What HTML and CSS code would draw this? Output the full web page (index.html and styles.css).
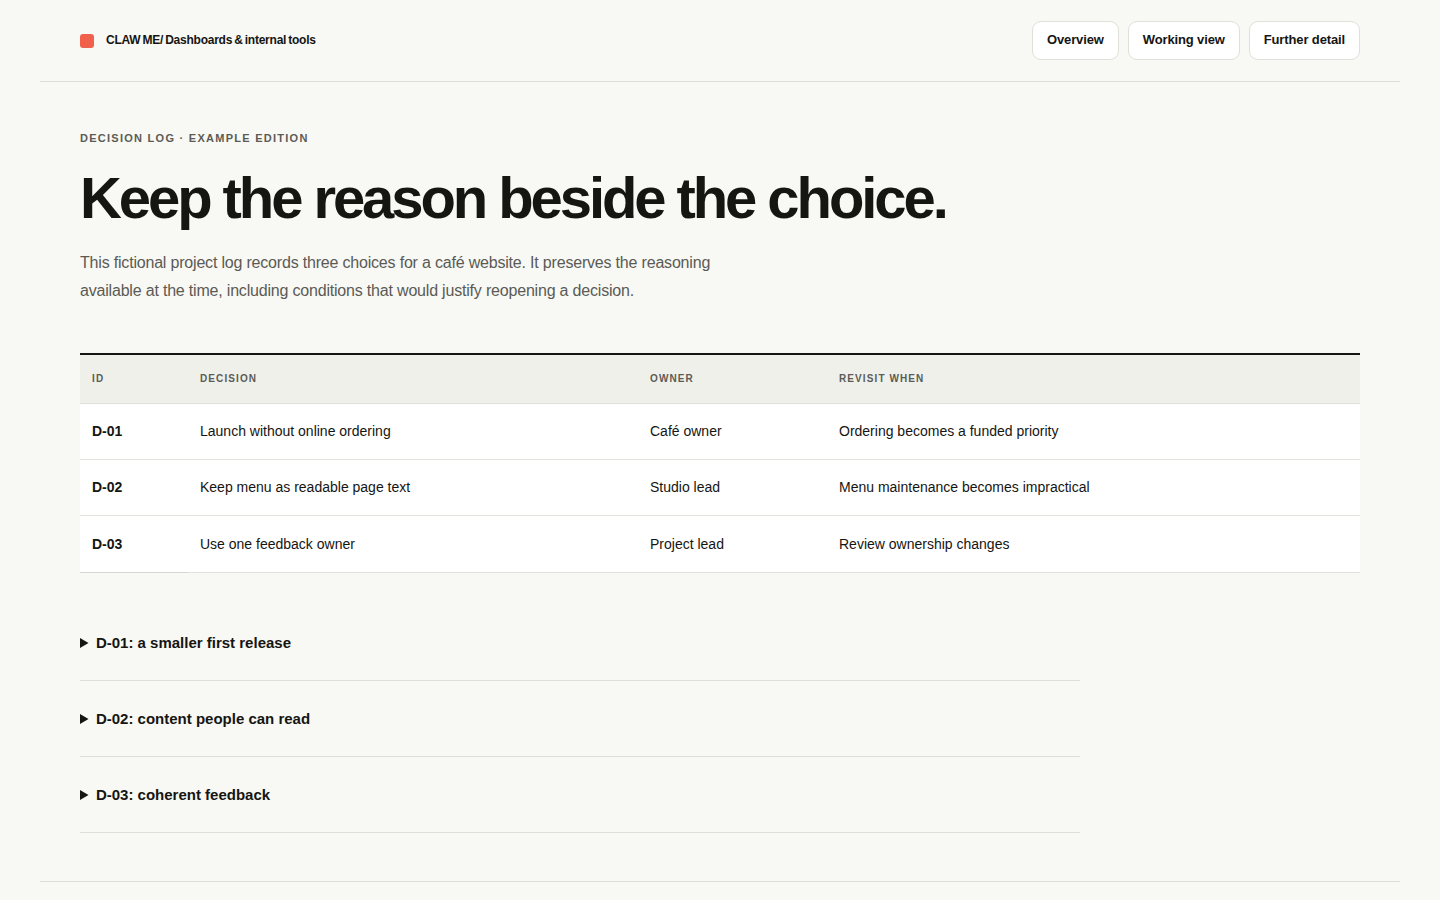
FILE: index.html
```html
<!DOCTYPE html>
<html lang="en">
<head>
<meta charset="utf-8">
<title>Decision log</title>
<link rel="stylesheet" href="styles.css">
</head>
<body>
<div class="page">
  <header class="topbar">
    <div class="brand"><span class="brand-mark"></span><span class="brand-text">CLAW ME/ Dashboards &amp; internal tools</span></div>
    <nav class="nav">
      <a class="nav-btn" href="#">Overview</a>
      <a class="nav-btn" href="#">Working view</a>
      <a class="nav-btn" href="#">Further detail</a>
    </nav>
  </header>
  <main class="main">
    <p class="eyebrow">Decision log · Example edition</p>
    <h1 class="title">Keep the reason beside the choice.</h1>
    <p class="lede">This fictional project log records three choices for a café website. It preserves the reasoning available at the time, including conditions that would justify reopening a decision.</p>
    <table class="log">
      <thead>
        <tr><th class="c-id">ID</th><th class="c-dec">Decision</th><th class="c-own">Owner</th><th class="c-rev">Revisit when</th></tr>
      </thead>
      <tbody>
        <tr><th class="rid">D-01</th><td>Launch without online ordering</td><td>Café owner</td><td>Ordering becomes a funded priority</td></tr>
        <tr><th class="rid">D-02</th><td>Keep menu as readable page text</td><td>Studio lead</td><td>Menu maintenance becomes impractical</td></tr>
        <tr class="last"><th class="rid">D-03</th><td>Use one feedback owner</td><td>Project lead</td><td>Review ownership changes</td></tr>
      </tbody>
    </table>
    <div class="notes">
      <details class="note"><summary>D-01: a smaller first release</summary><p>Ordering adds payments, staffing and support work the café is not yet ready to run.</p></details>
      <details class="note"><summary>D-02: content people can read</summary><p>Menu text on the page can be read aloud, searched and updated without a designer.</p></details>
      <details class="note"><summary>D-03: coherent feedback</summary><p>One owner merges comments so the studio receives a single, consistent brief.</p></details>
    </div>
  </main>
  <footer class="foot"></footer>
</div>
</body>
</html>
```

FILE: styles.css
```css
* { box-sizing: border-box; }
html, body { margin: 0; padding: 0; }
body {
  background: #f8f8f4;
  color: #151512;
  font-family: "Liberation Sans", Arial, sans-serif;
}
.page { margin: 0 40px; }
.topbar {
  height: 82px;
  display: flex;
  align-items: center;
  justify-content: space-between;
  padding: 0 40px;
  border-bottom: 1px solid #dfdfd8;
}
.brand { display: flex; align-items: center; gap: 12px; }
.brand-mark {
  width: 14px; height: 14px;
  background: #f0604a;
  border-radius: 3px;
}
.brand-text {
  font-size: 12px;
  font-weight: 700;
  letter-spacing: -0.02em;
  word-spacing: -1px;
  line-height: 16px;
  margin-top: -1px;
}
.nav { display: flex; gap: 9px; }
.nav-btn {
  display: flex;
  align-items: center;
  height: 39px;
  padding: 0 14px 2px;
  border: 1px solid #e0e0da;
  border-radius: 9px;
  background: #ffffff;
  color: #151512;
  text-decoration: none;
  font-size: 13px;
  font-weight: 700;
  letter-spacing: -0.01em;
}
.main { padding: 49px 40px 48px; }
.eyebrow {
  margin: 0;
  font-size: 11px;
  font-weight: 700;
  letter-spacing: 0.115em;
  text-transform: uppercase;
  color: #5c5c56;
  line-height: 14px;
}
.title {
  margin: 19px 0 0;
  font-size: 58px;
  line-height: 68px;
  font-weight: 700;
  letter-spacing: -0.053em;
}
.lede {
  margin: 17px 0 0;
  max-width: 650px;
  font-size: 16px;
  line-height: 28px;
  color: #5b5b55;
  letter-spacing: -0.012em;
}
.log {
  margin-top: 48px;
  width: 100%;
  border-collapse: collapse;
  border-top: 2px solid #151512;
  font-size: 14px;
  letter-spacing: 0;
}
.log thead th {
  background: #f0f0eb;
  height: 49px;
  text-align: left;
  font-size: 10px;
  font-weight: 700;
  letter-spacing: 0.11em;
  text-transform: uppercase;
  color: #5c5c56;
  padding: 0 12px;
  border-bottom: 1px solid #e0e0da;
}
.c-id { width: 108px; }
.c-dec { width: 450px; }
.c-own { width: 189px; }
.log tbody td, .log tbody th {
  background: #ffffff;
  height: 56px;
  padding: 0 12px;
  text-align: left;
  border-bottom: 1px solid #e3e3dd;
  font-weight: 400;
}
.log tbody tr.last td, .log tbody tr.last th { height: 57px; }
.log tbody th.rid { font-weight: 700; }
.log tbody tr.last th.rid { border-bottom-color: #d6d6cf; }
.notes { margin-top: 32px; width: 1000px; }
.note { border-bottom: 1px solid #dfdfd8; }
.note summary {
  cursor: pointer;
  font-size: 15px;
  font-weight: 700;
  letter-spacing: 0;
  line-height: 20px;
  padding: 28px 0 27px;
}
.note p { margin: 0 0 20px; font-size: 14px; color: #5b5b55; }
.foot { border-top: 1px solid #dfdfd8; height: 20px; }
```
